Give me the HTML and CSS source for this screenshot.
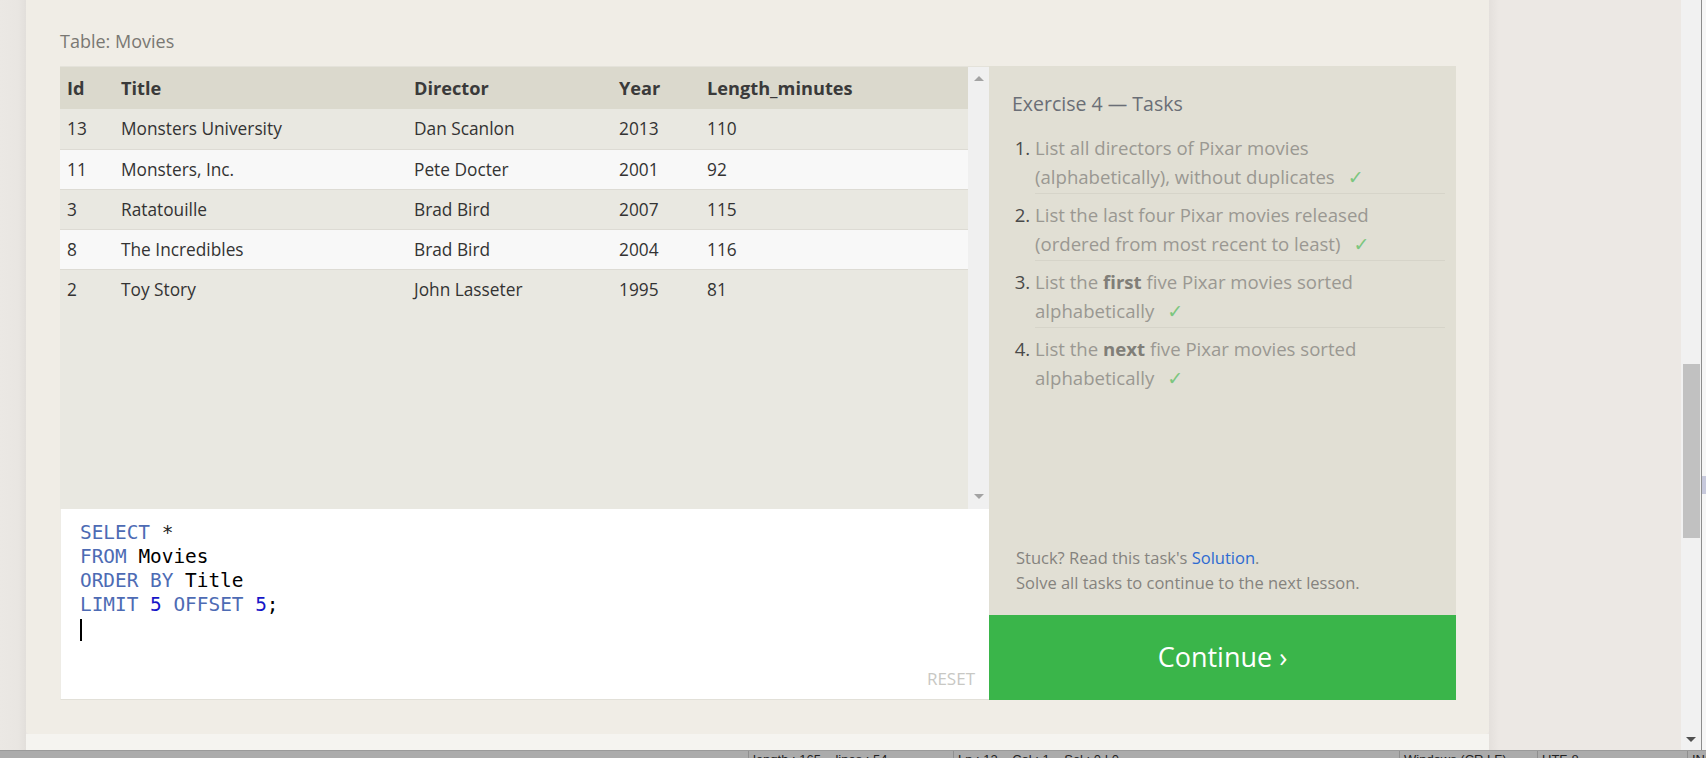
FILE: index.html
```html
<!DOCTYPE html>
<html>
<head>
<meta charset="utf-8">
<link rel="stylesheet" href="styles.css">
</head>
<body>
<div class="screen">
  <div class="top">
    <div class="leftstrip"></div>
    <div class="pagecol">
      <div class="container">
        <div class="label">Table: Movies</div>
        <div class="exercise">
          <div class="leftcol">
            <div class="results">
              <div class="tablewrap">
                <table class="movies">
                  <colgroup>
                    <col class="c-id"><col class="c-title"><col class="c-dir"><col class="c-year"><col>
                  </colgroup>
                  <thead>
                    <tr><th>Id</th><th>Title</th><th>Director</th><th>Year</th><th>Length_minutes</th></tr>
                  </thead>
                  <tbody>
                    <tr><td>13</td><td>Monsters University</td><td>Dan Scanlon</td><td>2013</td><td>110</td></tr>
                    <tr><td>11</td><td>Monsters, Inc.</td><td>Pete Docter</td><td>2001</td><td>92</td></tr>
                    <tr><td>3</td><td>Ratatouille</td><td>Brad Bird</td><td>2007</td><td>115</td></tr>
                    <tr><td>8</td><td>The Incredibles</td><td>Brad Bird</td><td>2004</td><td>116</td></tr>
                    <tr><td>2</td><td>Toy Story</td><td>John Lasseter</td><td>1995</td><td>81</td></tr>
                  </tbody>
                </table>
              </div>
              <div class="vscroll">
                <span class="arrow up"></span>
                <span class="arrow down"></span>
              </div>
            </div>
            <div class="editor">
              <div class="code">
                <div class="line"><span class="kw">SELECT</span> <span class="op">*</span></div>
                <div class="line"><span class="kw">FROM</span> Movies</div>
                <div class="line"><span class="kw">ORDER BY</span> Title</div>
                <div class="line"><span class="kw">LIMIT</span> <span class="num">5</span> <span class="kw">OFFSET</span> <span class="num">5</span>;</div>
                <div class="line"><span class="cursor"></span></div>
              </div>
              <div class="reset">RESET</div>
            </div>
          </div>
          <div class="rightcol">
            <div class="tasks">
              <div class="tasks-title">Exercise 4 — Tasks</div>
              <ol class="tasklist">
                <li>List all directors of Pixar movies (alphabetically), without duplicates<span class="check">✓</span></li>
                <li>List the last four Pixar movies released (ordered from most recent to least)<span class="check">✓</span></li>
                <li>List the <b>first</b> five Pixar movies sorted alphabetically<span class="check">✓</span></li>
                <li>List the <b>next</b> five Pixar movies sorted alphabetically<span class="check">✓</span></li>
              </ol>
              <div class="stuck">
                <div>Stuck? Read this task's <a class="sol">Solution</a>.</div>
                <div>Solve all tasks to continue to the next lesson.</div>
              </div>
            </div>
            <div class="continue">Continue ›</div>
          </div>
        </div>
      </div>
      <div class="footerstrip"></div>
    </div>
    <div class="gutter"></div>
    <div class="bscroll">
      <div class="thumb"></div>
      <span class="barrow"></span>
    </div>
    <div class="edge"><div class="edge-mark"></div></div>
  </div>
  <div class="taskbar">
    <div class="tb-seg tb-a"></div>
    <div class="tb-seg tb-b">length : 165&nbsp;&nbsp;&nbsp; lines : 54</div>
    <div class="tb-seg tb-c">Ln : 12&nbsp;&nbsp;&nbsp; Col : 1&nbsp;&nbsp;&nbsp; Sel : 0 | 0</div>
    <div class="tb-seg tb-d">Windows (CR LF)</div>
    <div class="tb-seg tb-e">UTF-8</div>
    <div class="tb-seg tb-f">INS</div>
  </div>
</div>
</body>
</html>
```
FILE: styles.css
```css
* { box-sizing: border-box; }
html, body {
  margin: 0;
  padding: 0;
  width: 1706px;
  height: 758px;
  overflow: hidden;
  background: #ece8e4;
  font-family: "Open Sans", "Noto Sans", sans-serif;
}
.screen {
  display: flex;
  flex-direction: column;
  width: 1706px;
  height: 758px;
}
.top {
  display: flex;
  height: 750px;
}
.leftstrip {
  width: 26px;
  background: linear-gradient(to right, #ebe8e4 0%, #e9e6e2 70%, #e2dfdb 100%);
}
.pagecol {
  width: 1463px;
  display: flex;
  flex-direction: column;
}
.container {
  height: 734px;
  background: #f0ede6;
  padding: 29px 33px 0 34px;
  border-radius: 0 0 4px 4px;
}
.footerstrip {
  height: 16px;
  background: #f5f4f0;
}
.gutter {
  width: 192px;
  background: linear-gradient(to right, #e4e0dc 0px, #ece8e4 10px, #ece8e4 100%);
}
.bscroll {
  width: 20px;
  background: #f1f1f1;
  position: relative;
}
.thumb {
  margin: 364px 0 0 2px;
  width: 17px;
  height: 174px;
  background: #c1c1c1;
}
.barrow {
  position: absolute;
  left: 5px;
  bottom: 8px;
  width: 0; height: 0;
  border-left: 5px solid transparent;
  border-right: 5px solid transparent;
  border-top: 5px solid #505050;
}
.edge {
  width: 5px;
  background: #f6f6f6;
  border-left: 1px solid #8c8c8c;
  display: flex;
  flex-direction: column;
}
.edge-mark {
  margin-top: 476px;
  height: 18px;
  background: #c7c9dc;
}

.label {
  font-size: 18px;
  color: #7a7873;
  line-height: 24px;
  height: 24px;
  margin-bottom: 13px;
}
.exercise {
  display: flex;
  height: 634px;
}
.leftcol {
  width: 929px;
  display: flex;
  flex-direction: column;
}
.results {
  display: flex;
  height: 443px;
  background: #e9e8e1;
  border-top: 1px solid #e4e2da;
}
.tablewrap {
  flex: 1;
}
.movies {
  width: 100%;
  border-collapse: collapse;
  table-layout: fixed;
  font-size: 17.3px;
  color: #333;
}
.c-id { width: 54px; }
.c-title { width: 293px; }
.c-dir { width: 205px; }
.c-year { width: 88px; }
.movies th {
  text-align: left;
  font-weight: 700;
  background: #dbd9cd;
  height: 42px;
  padding: 0 0 0 7px;
  color: #3a3a3a;
  font-size: 18.2px;
}
.movies td {
  height: 40px;
  padding: 0 0 0 7px;
  border-bottom: 1px solid #dddbd4;
}
.movies tbody tr:nth-child(odd) td { background: #e9e8e1; }
.movies tbody tr:nth-child(even) td { background: #f8f8f8; }
.movies tbody tr:last-child td { border-bottom: none; }

.vscroll {
  width: 21px;
  background: #f0f0f0;
  display: flex;
  flex-direction: column;
  justify-content: space-between;
  align-items: center;
  padding: 9px 0 10px;
}
.arrow {
  width: 0; height: 0;
  border-left: 5px solid transparent;
  border-right: 5px solid transparent;
}
.arrow.up { border-bottom: 5px solid #a3a3a3; }
.arrow.down { border-top: 5px solid #a3a3a3; }

.editor {
  height: 191px;
  background: #fff;
  border-bottom: 1px solid #e2e0d8;
  border-left: 1px solid #eeece6;
  padding: 12px 14px 0 19px;
  display: flex;
  flex-direction: column;
}
.code {
  flex: 1;
  font-family: "DejaVu Sans Mono", "Liberation Mono", monospace;
  font-size: 19.4px;
  line-height: 24px;
  color: #000;
}
.line { height: 24px; white-space: pre; }
.kw { color: #4d6bb4; }
.num { color: #1515c8; }
.op { color: #222; }
.cursor {
  display: inline-block;
  width: 2px;
  height: 22px;
  background: #000;
  vertical-align: top;
  margin-top: 2px;
}
.reset {
  align-self: flex-end;
  font-size: 17px;
  color: #c8c8c4;
  line-height: 20px;
  margin-bottom: 10px;
}

.rightcol {
  width: 467px;
  display: flex;
  flex-direction: column;
}
.tasks {
  flex: 1;
  background: #e1dfd4;
  padding: 24px 11px 0 23px;
  display: flex;
  flex-direction: column;
}
.tasks-title {
  font-size: 19.5px;
  color: #6a6e76;
  line-height: 28px;
  margin-bottom: 15px;
}
.tasklist {
  margin: 0;
  padding: 0 0 0 23px;
  font-size: 18.6px;
  color: #9a9892;
  line-height: 29px;
}
.tasklist li {
  padding: 6px 8px 2px 0;
  border-bottom: 1px solid #d6d4c9;
}
.tasklist li:first-child { padding-top: 0; }
.tasklist li:last-child { border-bottom: none; }
.tasklist li::marker { color: #4a4a4a; }
.tasklist b { color: #807e78; }
.check {
  font-family: "DejaVu Sans", sans-serif;
  font-size: 19px;
  line-height: 1;
  color: #7cc67f;
  margin-left: 13px;
}
.stuck {
  margin-top: auto;
  padding: 0 0 20px 4px;
  font-size: 16.5px;
  color: #85837e;
  line-height: 25px;
}
.sol { color: #2d6ad1; }
.continue {
  height: 85px;
  background: #3ab54a;
  color: #fff;
  font-size: 27px;
  display: flex;
  align-items: center;
  justify-content: center;
  padding-bottom: 2px;
}

.taskbar {
  height: 8px;
  background: #ababab;
  display: flex;
  overflow: hidden;
  border-top: 1px solid #9a9a9a;
}
.tb-seg {
  font-family: "Liberation Sans", sans-serif;
  font-size: 13px;
  line-height: 13px;
  color: #222;
  padding: 2px 0 0 4px;
  border-left: 1px solid #8f8f8f;
  white-space: nowrap;
  overflow: hidden;
}
.tb-a { width: 748px; border-left: none; }
.tb-b { width: 205px; }
.tb-c { width: 446px; }
.tb-d { width: 138px; }
.tb-e { width: 150px; }
.tb-f { flex: 1; }
```
